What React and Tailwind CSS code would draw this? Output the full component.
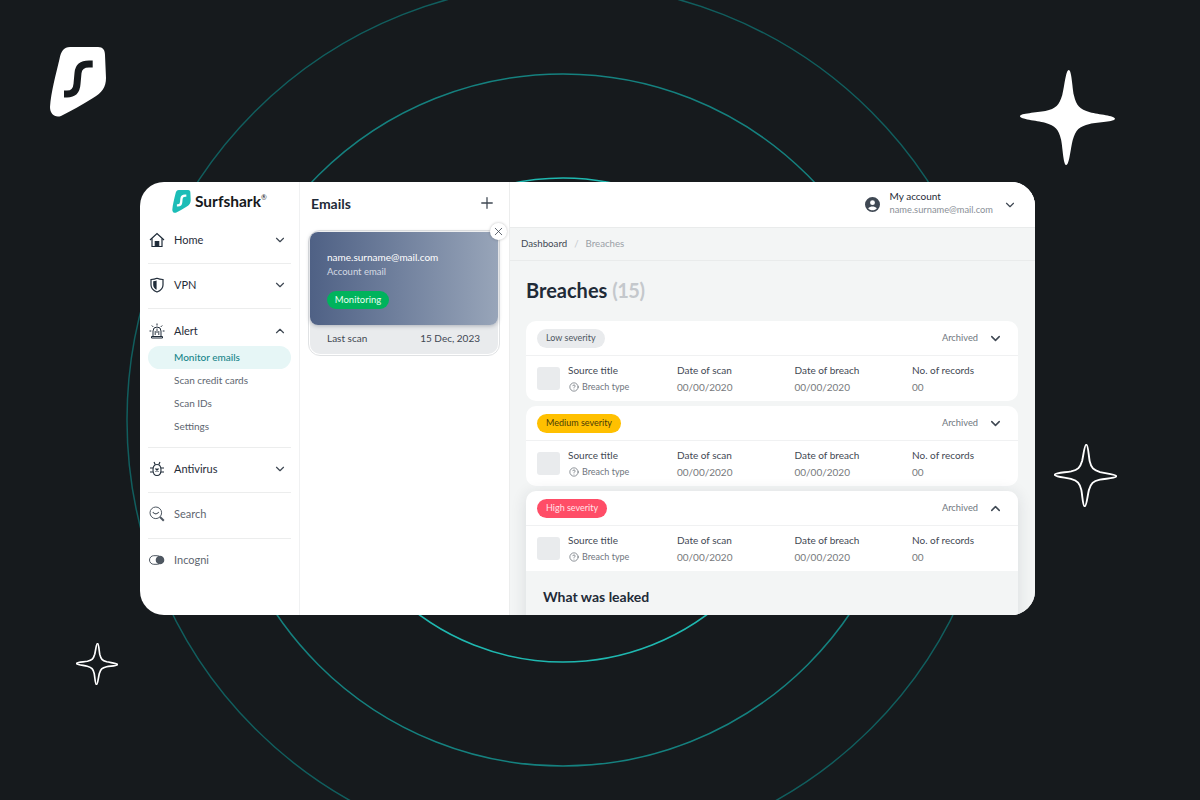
import { ChevronDown, ChevronUp, Plus, X, CircleHelp } from 'lucide-react'

const font = { fontFamily: '"Lato", "Liberation Sans", sans-serif' }

const STAR = 'M50 1C53 1 54 18 56 27C59 38 62 41 73 44C82 46 99 47 99 50C99 53 82 54 73 56C62 59 59 62 56 73C54 82 53 99 50 99C47 99 46 82 44 73C41 62 38 59 27 56C18 54 1 53 1 50C1 47 18 46 27 44C38 41 41 38 44 27C46 18 47 1 50 1Z'

function Star({ className, line = 0 }) {
  return (
    <svg viewBox="0 0 100 100" className={className}>
      <path d={STAR} fill={line ? 'none' : '#fff'} stroke="#fff" strokeWidth={line} transform="rotate(1.5 50 50)" />
    </svg>
  )
}

function LogoMark({ className, fill, ink }) {
  return (
    <svg viewBox="0 0 56 70" className={className}>
      <path d="M20 0H48C53 0 55 3 55 8L56 31C56 40 52 46 43 51C32 58 21 64 11 69C5 71 0 67 0 60C1 45 6 27 9.500 12C11 4 14 0 20 0Z" fill={fill} />
      <path d="M42.7 17H39C32 17 28.500 20 28 26L27 37C26.500 44 23 47 17 47H14" fill="none" stroke={ink} strokeWidth="7" />
    </svg>
  )
}

function HomeIcon() {
  return (
    <svg viewBox="0 0 16 16" className="h-4 w-4" fill="none" stroke="#1f2b38" strokeWidth="1.2">
      <path d="M1 8 8 1.500 15 8" />
      <path d="M3 6.500V14.500H13V6.500" />
      <path d="M6.300 14.500V9.500H9.700V14.500" fill="#1f2b38" />
    </svg>
  )
}

function ShieldIcon() {
  return (
    <svg viewBox="0 0 16 16" className="h-4 w-4" fill="none" stroke="#1f2b38" strokeWidth="1.2">
      <path d="M2 2.500C5 2.500 6.500 2 8 1.300 9.500 2 11 2.500 14 2.500V8C14 11.500 11.500 13.700 8 15 4.500 13.700 2 11.500 2 8Z" />
      <path d="M4.200 4.200C5.500 4.200 6.600 3.900 7.600 3.400V12.800C5.500 11.800 4.200 10.200 4.200 8Z" fill="#1f2b38" stroke="none" />
    </svg>
  )
}

function AlertIcon() {
  return (
    <svg viewBox="0 0 16 16" className="h-4 w-4" fill="none" stroke="#1f2b38" strokeWidth="1">
      <path d="M4 13V8A4 4 0 0 1 12 8V13" />
      <path d="M2.500 13.500H13.500V15H2.500Z" />
      <path d="M8 5.500V10M6.200 8V12M9.800 8V12" strokeWidth="0.9" />
      <path d="M8 0.500V2.500M2.800 2.500 4.200 3.900M13.200 2.500 11.800 3.900M0.500 8H2.300M13.700 8H15.500" />
    </svg>
  )
}

function BugIcon() {
  return (
    <svg viewBox="0 0 16 16" className="h-4 w-4" fill="none" stroke="#1f2b38" strokeWidth="1.1">
      <path d="M8 3.500C11 3.500 12 6 12 9C12 12.500 10.500 14.500 8 14.500C5.500 14.500 4 12.500 4 9C4 6 5 3.500 8 3.500Z" />
      <path d="M5 1 6.300 3.800M11 1 9.700 3.800M1 7H4M12 7H15M1 11H4M12 11H15" />
      <path d="M6.500 7.500 9.500 10.500M9.500 7.500 6.500 10.500" strokeWidth="1.3" />
    </svg>
  )
}

function SearchIcon() {
  return (
    <svg viewBox="0 0 16 16" className="h-4 w-4" fill="none" stroke="#4e5761" strokeWidth="1">
      <circle cx="6.800" cy="6.800" r="5.800" />
      <path d="M3.800 6C5.500 8.400 8 8.400 9.800 6" strokeWidth="1.2" />
      <path d="M11 11 14.800 14.800" strokeWidth="2" />
    </svg>
  )
}

function ToggleIcon() {
  return (
    <svg viewBox="0 0 16 16" className="h-4 w-4">
      <rect x="0.500" y="3.700" width="12" height="8.600" rx="4.300" fill="none" stroke="#4e5761" />
      <circle cx="11" cy="8" r="4.300" fill="#4e5761" />
    </svg>
  )
}

function UserIcon() {
  return (
    <svg viewBox="0 0 16 16" className="h-[15px] w-[15px]">
      <path
        fillRule="evenodd"
        fill="#3f4853"
        d="M8 0A8 8 0 1 1 8 16A8 8 0 1 1 8 0ZM8 3.400A2.600 2.600 0 1 0 8 8.600A2.600 2.600 0 1 0 8 3.400ZM3.400 12C4.500 13.500 6.100 14.200 8 14.200S11.500 13.500 12.600 12C11.500 10.500 9.800 10 8 10S4.500 10.500 3.400 12Z"
      />
    </svg>
  )
}

function NavRow({ icon, label, open, muted, arrow = true }) {
  return (
    <div className="flex h-[24px] items-center">
      <div className="flex w-[17px] justify-center">{icon}</div>
      <span className={`ml-[9px] text-[11px] ${muted ? 'text-[#5e6670]' : 'text-[#1f2b38]'}`}>{label}</span>
      {arrow && (
        <span className="ml-auto mr-[4px] text-[#3f4853]">
          {open ? <ChevronUp size={14} /> : <ChevronDown size={14} />}
        </span>
      )}
    </div>
  )
}

function Sidebar() {
  return (
    <aside className="flex w-[160px] shrink-0 flex-col border-r border-[#f0f1f2] px-2 pt-2">
      <div className="flex h-[23px] items-center pl-[24px]">
        <LogoMark className="h-[23px] w-[19px]" fill="#1cbdb7" ink="#fff" />
        <span className="ml-1 text-[15.5px] font-bold text-[#16191c]">Surfshark</span>
        <span className="-mt-2 text-[7px] text-[#16191c]">®</span>
      </div>
      <div className="mt-[15px] border-b border-[#eceded] pb-[11px]">
        <NavRow icon={<HomeIcon />} label="Home" />
      </div>
      <div className="border-b border-[#eceded] pb-[11px] pt-[9px]">
        <NavRow icon={<ShieldIcon />} label="VPN" />
      </div>
      <div className="border-b border-[#eceded] pb-[9px] pt-[10px]">
        <NavRow icon={<AlertIcon />} label="Alert" open />
        <div className="flex flex-col text-[10px] text-[#5e6670]">
          <span className="mt-[3px] flex h-[23px] items-center rounded-full bg-[#e6f6f6] pl-[26px] font-medium text-[#16858a]">Monitor emails</span>
          <span className="flex h-[23px] items-center pl-[26px]">Scan credit cards</span>
          <span className="flex h-[23px] items-center pl-[26px]">Scan IDs</span>
          <span className="flex h-[23px] items-center pl-[26px]">Settings</span>
        </div>
      </div>
      <div className="border-b border-[#eceded] pb-[11px] pt-[9px]">
        <NavRow icon={<BugIcon />} label="Antivirus" />
      </div>
      <div className="border-b border-[#eceded] pb-[12px] pt-[9px]">
        <NavRow icon={<SearchIcon />} label="Search" muted arrow={false} />
      </div>
      <div className="pt-[9px]">
        <NavRow icon={<ToggleIcon />} label="Incogni" muted arrow={false} />
      </div>
    </aside>
  )
}

function EmailsPanel() {
  return (
    <section className="flex w-[210px] shrink-0 flex-col border-r border-[#eceded] px-2">
      <div className="mb-[6px] flex h-[42px] items-center justify-between pl-[3px] pr-[5px]">
        <span className="text-[14px] font-bold text-[#1f2b38]">Emails</span>
        <Plus size={18} strokeWidth={1.7} className="text-[#3f4853]" />
      </div>
      <div className="relative w-[192px] rounded-[12px] border border-[#e0e2e4] bg-white p-px">
        <div className="rounded-[10px] bg-[#e9ebed]">
          <div className="flex h-[93px] flex-col rounded-[8px] bg-gradient-to-r from-[#4f6185] to-[#98a5b9] pl-[17px] pt-[18px] shadow-[0_1px_4px_rgba(30,40,60,0.3)]">
            <span className="text-[10px] leading-[14px] text-white">name.surname@mail.com</span>
            <span className="mt-px text-[9.500px] leading-[14px] text-[#d5dae3]">Account email</span>
            <span className="mt-[12px] flex h-[18px] w-[62px] items-center justify-center rounded-full bg-[#00b35c] text-[9.500px] text-[#e6fff2]">Monitoring</span>
          </div>
          <div className="flex h-[29px] items-center justify-between pb-[2px] pl-[17px] pr-[18px] text-[10px] text-[#3f4853]">
            <span>Last scan</span>
            <span>15 Dec, 2023</span>
          </div>
        </div>
        <div className="absolute -right-[8px] -top-[8px] flex h-[17px] w-[17px] items-center justify-center rounded-full bg-white shadow-[0_0_3px_rgba(0,0,0,0.25)]">
          <X size={13} strokeWidth={1.5} className="text-[#3f4853]" />
        </div>
      </div>
    </section>
  )
}

function Column({ title, value }) {
  return (
    <div className="w-[117.500px] shrink-0">
      <div className="text-[10px] leading-[14px] text-[#3f4853]">{title}</div>
      <div className="mt-[3px] text-[10px] leading-[14px] text-[#77797c]">{value}</div>
    </div>
  )
}

function BreachCard({ label, pill, open, shadow, children }) {
  return (
    <div className={`overflow-hidden bg-white ${open ? 'rounded-t-[10px]' : 'rounded-[10px]'} ${shadow ? 'shadow-[0_2px_16px_rgba(30,40,60,0.12)]' : ''}`}>
      <div className="flex h-[35px] items-center border-b border-[#f0f1f2] pl-[11px] pr-[15px]">
        <span className={`flex h-[19px] items-center rounded-full px-[9px] text-[9px] ${pill}`}>{label}</span>
        <span className="ml-auto text-[9.300px] text-[#6f767e]">Archived</span>
        <span className="ml-[10px] text-[#3f4853]">
          {open ? <ChevronUp size={15} strokeWidth={2.4} /> : <ChevronDown size={15} strokeWidth={2.4} />}
        </span>
      </div>
      <div className="flex h-[45px] items-center overflow-hidden pl-[11px]">
        <div className="h-[23px] w-[23px] shrink-0 rounded-[3px] bg-[#e9ebed]" />
        <div className="ml-2 w-[109px] shrink-0">
          <div className="text-[10px] leading-[14px] text-[#3f4853]">Source title</div>
          <div className="mt-[3px] flex items-center text-[9px] leading-[14px] text-[#6f767e]">
            <CircleHelp size={10} strokeWidth={1.4} className="ml-px mr-[3px] text-[#3f4853]" />
            Breach type
          </div>
        </div>
        <Column title="Date of scan" value="00/00/2020" />
        <Column title="Date of breach" value="00/00/2020" />
        <Column title="No. of records" value="00" />
      </div>
      {children}
    </div>
  )
}

function Main() {
  return (
    <main className="flex min-w-0 flex-1 flex-col bg-[#f3f5f5]">
      <header className="flex h-[46px] shrink-0 items-center justify-end border-b border-[#e9ebeb] bg-white pr-[18px]">
        <UserIcon />
        <div className="-mt-[3px] ml-[10px]">
          <div className="text-[10px] leading-[14px] text-[#1f2b38]">My account</div>
          <div className="text-[9.300px] leading-[14px] text-[#8a9097]">name.surname@mail.com</div>
        </div>
        <ChevronDown size={14} className="ml-[10px] text-[#3f4853]" />
      </header>
      <div className="flex h-[33px] shrink-0 items-center gap-[7px] border-b border-[#e9ebeb] pb-[2px] pl-[11px] text-[9.700px]">
        <span className="text-[#3f4853]">Dashboard</span>
        <span className="text-[#c4c8cc]">/</span>
        <span className="text-[#9aa0a6]">Breaches</span>
      </div>
      <div className="flex flex-1 flex-col overflow-hidden pl-[16px] pr-[17px] pt-[14px]">
        <h1 className="text-[20px] font-bold leading-[30px] text-[#1f2b38]">
          Breaches <span className="tracking-tight text-[#c4c8cc]">(15)</span>
        </h1>
        <div className="mt-[16px] flex flex-col gap-[5px]">
          <BreachCard label="Low severity" pill="bg-[#e9ebed] text-[#4e5761]" />
          <BreachCard label="Medium severity" pill="bg-[#ffc000] text-[#4a3c08]" />
          <BreachCard label="High severity" pill="bg-[#ff4d67] text-[#ffe3e7]" open shadow>
            <div className="h-[60px] bg-[#f3f5f5] pl-[17px] pt-[15px] text-[14px] font-bold text-[#1f2b38]">What was leaked</div>
          </BreachCard>
        </div>
      </div>
    </main>
  )
}

export default function App() {
  return (
    <div className="relative h-[800px] w-[1200px] overflow-hidden bg-[#161a1d] pl-[140px] pt-[182px]" style={font}>
      <svg className="absolute left-0 top-0 h-[800px] w-[1200px]" fill="none">
        <circle cx="563" cy="420" r="242" stroke="#1fb8b0" strokeWidth="1.500" />
        <circle cx="563" cy="420" r="346" stroke="#15817f" strokeWidth="1.500" />
        <circle cx="563" cy="420" r="436" stroke="#115e5e" strokeWidth="1.500" />
      </svg>
      <LogoMark className="absolute left-[50px] top-[47px] h-[70px] w-[56px]" fill="#fff" ink="#161a1d" />
      <Star className="absolute left-[1019px] top-[69px] h-[97px] w-[97px]" />
      <Star line={3} className="absolute left-[1054px] top-[444px] h-[63px] w-[63px]" />
      <Star line={4} className="absolute left-[76px] top-[643px] h-[42px] w-[42px]" />
      <div className="relative flex h-[433px] w-[895px] overflow-hidden rounded-[24px] bg-white">
        <Sidebar />
        <EmailsPanel />
        <Main />
      </div>
    </div>
  )
}
